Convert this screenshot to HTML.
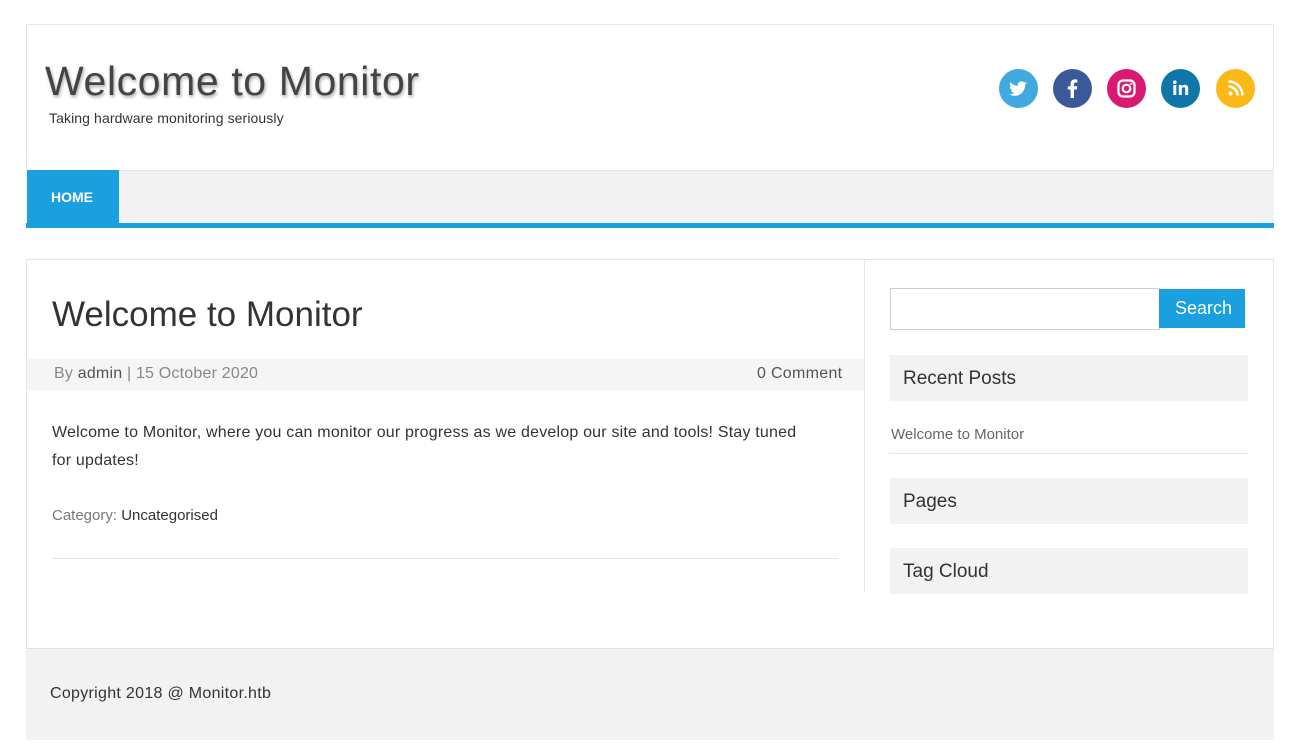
<!DOCTYPE html>
<html><head><meta charset="utf-8"><style>
*{margin:0;padding:0;box-sizing:border-box}
body{width:1301px;height:756px;background:#fff;font-family:"Liberation Sans",sans-serif;color:#333;position:relative;overflow:hidden}
.a{position:absolute}
.ic{position:absolute;top:69px;width:39px;height:39px;border-radius:50%}
.ic svg{position:absolute;left:0;top:0}
.wt{background:#f2f2f2;left:890px;width:358px;height:46px;font-size:19px;color:#333;padding:13px 0 0 13px}
</style></head><body>
<div class="a" style="left:26px;top:24px;width:1248px;height:205px;border:1px solid #e6e6e6;border-bottom:none"></div>
<div class="a" style="left:45px;top:58px;font-size:41px;color:#444;text-shadow:1px 2px 3px rgba(0,0,0,.35);letter-spacing:0.6px">Welcome to Monitor</div>
<div class="a" style="left:49px;top:110px;font-size:14px;color:#333;letter-spacing:0.1px">Taking hardware monitoring seriously</div>

<div class="ic" style="left:999px;background:#3fa9e0"><svg width="39" height="39" viewBox="0 0 39 39"><path d="M28 14c-.7.3-1.4.5-2.1.6.8-.5 1.3-1.2 1.6-2-.7.4-1.5.7-2.3.9a3.7 3.7 0 0 0-6.3 3.4c-3.1-.2-5.8-1.6-7.6-3.8-1 1.7-.5 3.8 1.1 4.9-.6 0-1.2-.2-1.7-.5 0 1.8 1.3 3.3 3 3.6-.5.2-1.1.2-1.7.1.5 1.5 1.9 2.5 3.5 2.6A7.4 7.4 0 0 1 10 25.3c1.6 1 3.6 1.6 5.7 1.6 6.8 0 10.6-5.8 10.4-11 .8-.5 1.4-1.2 1.9-1.9z" fill="#fff"/></svg></div>
<div class="ic" style="left:1053px;background:#3b5998"><svg width="39" height="39" viewBox="0 0 39 39"><path d="M21 29v-8.5h2.8l.4-3.3H21v-2.1c0-1 .3-1.6 1.6-1.6h1.7v-3a22 22 0 0 0-2.5-.1c-2.5 0-4.2 1.5-4.2 4.3v2.5h-2.8v3.3h2.8V29z" fill="#fff"/></svg></div>
<div class="ic" style="left:1107px;background:#d91a72"><svg width="39" height="39" viewBox="0 0 39 39"><rect x="11.5" y="11.5" width="16" height="16" rx="4.5" fill="none" stroke="#fff" stroke-width="2.2"/><circle cx="19.5" cy="19.5" r="3.8" fill="none" stroke="#fff" stroke-width="2.2"/><circle cx="24.2" cy="14.8" r="1.1" fill="#fff"/></svg></div>
<div class="ic" style="left:1161px;background:#0e76a8"><svg width="39" height="39" viewBox="0 0 39 39"><circle cx="13.8" cy="13.2" r="1.8" fill="#fff"/><rect x="12.3" y="16" width="3" height="10" fill="#fff"/><path d="M17.8 16h2.9v1.4c.5-.9 1.6-1.7 3.2-1.7 2.8 0 3.3 1.8 3.3 4.2V26h-3v-5.3c0-1.2-.1-2.5-1.6-2.5s-1.8 1.2-1.8 2.4V26h-3z" fill="#fff"/></svg></div>
<div class="ic" style="left:1216px;background:#fbb917"><svg width="39" height="39" viewBox="0 0 39 39"><circle cx="14.5" cy="24.5" r="2" fill="#fff"/><path d="M12.5 17.5a9 9 0 0 1 9 9M12.5 12.5a14 14 0 0 1 14 14" fill="none" stroke="#fff" stroke-width="2.6"/></svg></div>

<div class="a" style="left:26px;top:170px;width:1248px;height:54px;background:#f2f2f2;border-top:1px solid #e6e6e6"></div>
<div class="a" style="left:27px;top:170px;width:92px;height:54px;background:#1a9fdf;color:#fff;font-weight:bold;font-size:14px;padding:19px 0 0 24px">HOME</div>
<div class="a" style="left:26px;top:223px;width:1248px;height:5px;background:#1a9fdf"></div>

<div class="a" style="left:26px;top:259px;width:1248px;height:390px;border:1px solid #e6e6e6;border-bottom:none"></div>
<div class="a" style="left:864px;top:259px;width:1px;height:333px;background:#e6e6e6"></div>
<div class="a" style="left:52px;top:295px;font-size:35px;color:#333">Welcome to Monitor</div>
<div class="a" style="left:27px;top:359px;width:837px;height:31px;background:#f5f5f5"></div>
<div class="a" style="left:54px;top:365px;font-size:16px;color:#888;letter-spacing:0.2px">By <span style="color:#555">admin</span> | 15 October 2020</div>
<div class="a" style="left:757px;top:365px;font-size:16px;color:#555;letter-spacing:0.3px">0 Comment</div>
<div class="a" style="left:52px;top:419px;width:790px;font-size:16px;line-height:28px;color:#333;letter-spacing:0.2px;white-space:nowrap">Welcome to Monitor, where you can monitor our progress as we develop our site and tools! Stay tuned<br>for updates!</div>
<div class="a" style="left:52px;top:507px;font-size:15px;color:#777">Category: <span style="color:#333">Uncategorised</span></div>
<div class="a" style="left:52px;top:558px;width:786px;height:1px;background:#e6e6e6"></div>

<div class="a" style="left:890px;top:288px;width:270px;height:42px;border:1px solid #ccc"></div>
<div class="a" style="left:1159px;top:289px;width:86px;height:39px;background:#1a9fdf;color:#fff;font-size:18px;padding:9px 0 0 16px">Search</div>
<div class="a wt" style="top:355px">Recent Posts</div>
<div class="a" style="left:891px;top:426px;font-size:15px;color:#666">Welcome to Monitor</div>
<div class="a" style="left:889px;top:453px;width:359px;height:1px;background:#e6e6e6"></div>
<div class="a wt" style="top:478px">Pages</div>
<div class="a wt" style="top:548px">Tag Cloud</div>

<div class="a" style="left:26px;top:648px;width:1248px;height:92px;background:#f2f2f2;border-top:1px solid #e0e0e0"></div>
<div class="a" style="left:50px;top:685px;font-size:16px;color:#333;letter-spacing:0.3px">Copyright 2018 @ Monitor.htb</div>
</body></html>
